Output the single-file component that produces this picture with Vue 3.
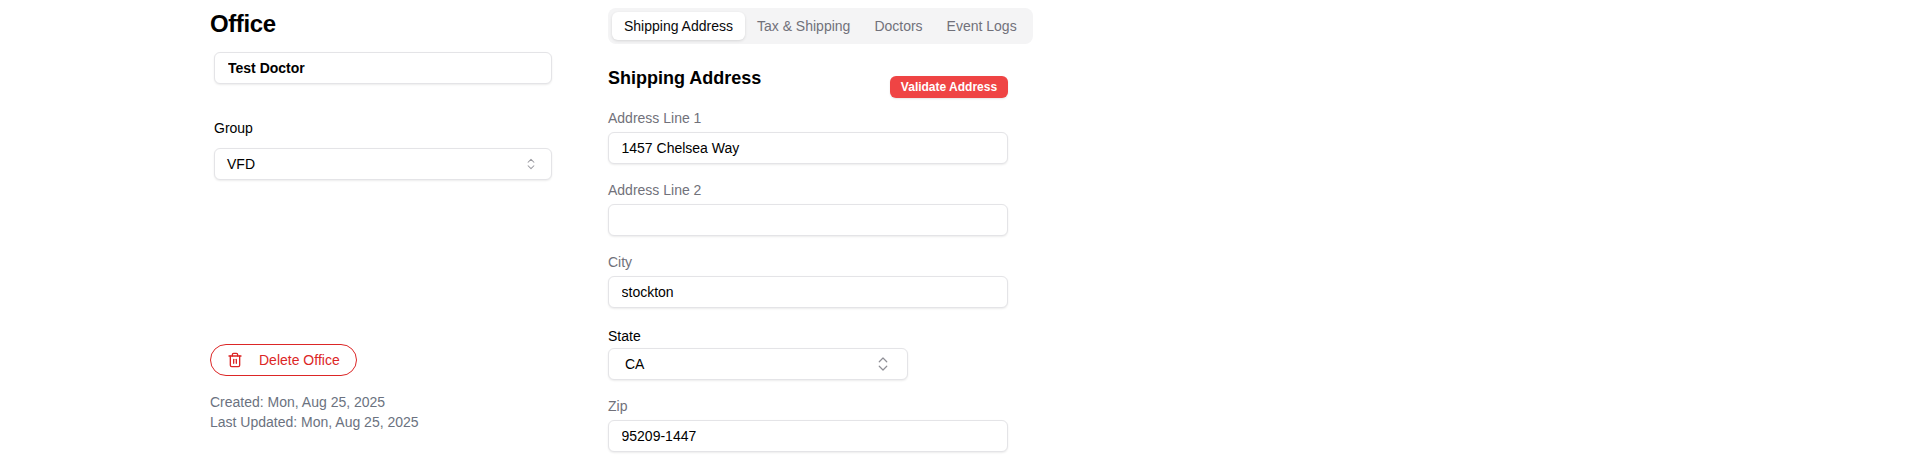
<template>
  <div class="office-page">
    <!-- Left column -->
    <aside class="office-side">
      <h1>Office</h1>
      <div class="side-fields">
        <input class="field name-field" type="text" value="Test Doctor" />
        <label class="group-label">Group</label>
        <button class="field select-field group-select" type="button">
          <span>VFD</span>
          <svg class="chevrons" viewBox="0 0 24 24"><path d="m7 15 5 5 5-5" /><path d="m7 9 5-5 5 5" /></svg>
        </button>
      </div>
      <div class="side-bottom">
        <button class="delete-btn" type="button">
          <svg class="trash" viewBox="0 0 24 24">
            <path d="M3 6h18" />
            <path d="M19 6v14c0 1-1 2-2 2H7c-1 0-2-1-2-2V6" />
            <path d="M8 6V4c0-1 1-2 2-2h4c1 0 2 1 2 2v2" />
            <line x1="10" x2="10" y1="11" y2="17" />
            <line x1="14" x2="14" y1="11" y2="17" />
          </svg>
          <span>Delete Office</span>
        </button>
        <div class="dates">
          <div>Created: {{ created }}</div>
          <div>Last Updated: {{ created }}</div>
        </div>
      </div>
    </aside>

    <!-- Right column -->
    <main class="office-main">
      <nav class="tabs">
        <button
          v-for="tab in tabs"
          :key="tab"
          class="tab"
          :class="{ active: tab === activeTab }"
          type="button"
          @click="activeTab = tab"
        >
          {{ tab }}
        </button>
      </nav>

      <div class="address-form">
        <div class="form-head">
          <h2>Shipping Address</h2>
          <button class="validate-btn" type="button">Validate Address</button>
        </div>

        <label class="muted-label first">Address Line 1</label>
        <input class="field" type="text" value="1457 Chelsea Way" />

        <label class="muted-label">Address Line 2</label>
        <input class="field" type="text" value="" />

        <label class="muted-label">City</label>
        <input class="field" type="text" value="stockton" />

        <label class="state-label">State</label>
        <button class="field select-field state-select" type="button">
          <span>CA</span>
          <svg class="chevrons big" viewBox="0 0 24 24"><path d="m7 15 5 5 5-5" /><path d="m7 9 5-5 5 5" /></svg>
        </button>

        <label class="muted-label">Zip</label>
        <input class="field" type="text" value="95209-1447" />
      </div>
    </main>
  </div>
</template>

<script setup>
import { ref } from 'vue'

const tabs = ['Shipping Address', 'Tax & Shipping', 'Doctors', 'Event Logs']
const activeTab = ref('Shipping Address')
const created = 'Mon, Aug 25, 2025'
</script>

<style scoped>
.office-page {
  display: flex;
  height: 464px;
  padding-left: 210px;
  box-sizing: border-box;
  overflow: hidden;
  background: #fff;
  color: #000;
  font-family: "Liberation Sans", Arial, sans-serif;
  font-size: 14px;
}
/* Left column */
.office-side {
  width: 398px;
  height: 432px;
  display: flex;
  flex-direction: column;
}
.office-side h1 {
  margin: 8px 0 0;
  font-size: 24px;
  line-height: 32px;
  font-weight: 700;
  letter-spacing: -0.4px;
}
.side-fields {
  display: flex;
  flex-direction: column;
  width: 338px;
  margin: 12px 0 0 4px;
}
.group-label {
  margin-top: 34px;
  line-height: 20px;
}
.group-select {
  margin-top: 10px;
}
.side-bottom {
  margin-top: auto;
}
.delete-btn {
  display: flex;
  align-items: center;
  width: 147px;
  height: 32px;
  padding: 0 0 0 16px;
  border: 1px solid #dc2626;
  border-radius: 16px;
  background: #fff;
  color: #dc2626;
  font: inherit;
}
.trash {
  width: 16px;
  height: 16px;
  margin-right: 16px;
  fill: none;
  stroke: currentColor;
  stroke-width: 2;
  stroke-linecap: round;
  stroke-linejoin: round;
}
.dates {
  margin-top: 16px;
  color: #6b7280;
  line-height: 20px;
}
/* Right column */
.office-main {
  width: 425px;
}
.tabs {
  display: flex;
  align-items: center;
  height: 36px;
  margin-top: 8px;
  padding: 0 4px;
  box-sizing: border-box;
  border-radius: 8px;
  background: #f4f4f5;
}
.tab {
  height: 28px;
  padding: 0 12px;
  border: none;
  border-radius: 6px;
  background: transparent;
  color: #71717a;
  font: inherit;
  white-space: nowrap;
}
.tab.active {
  background: #fff;
  color: #09090b;
  box-shadow: 0 1px 3px rgba(0, 0, 0, 0.12);
}
.address-form {
  display: flex;
  flex-direction: column;
  width: 400px;
}
.form-head {
  display: flex;
  align-items: flex-start;
  justify-content: space-between;
  height: 44px;
  margin-top: 20px;
}
.form-head h2 {
  margin: 0;
  font-size: 18px;
  line-height: 28px;
  font-weight: 700;
}
.validate-btn {
  width: 118px;
  height: 22px;
  margin-top: 12px;
  padding: 0;
  border: none;
  border-radius: 6px;
  background: #ef4444;
  color: #fff;
  font: inherit;
  font-size: 12px;
  font-weight: 700;
  box-shadow: 0 1px 2px rgba(0, 0, 0, 0.1);
}
.muted-label,
.state-label {
  height: 20px;
  margin: 16px 0 4px;
  line-height: 20px;
  color: #71717a;
}
.muted-label.first {
  margin-top: 0;
}
.state-label {
  color: #000;
  margin: 18px 0 2px;
}
.field {
  display: block;
  width: 100%;
  height: 32px;
  box-sizing: border-box;
  padding: 0 12.5px;
  border: 1px solid #e4e4e7;
  border-radius: 6px;
  background: #fff;
  color: #000;
  font: inherit;
  box-shadow: 0 1px 2px rgba(0, 0, 0, 0.08);
  outline: none;
}
.name-field {
  padding: 0 13px;
  font-weight: 700;
}
.select-field {
  display: flex;
  align-items: center;
  justify-content: space-between;
  text-align: left;
}
.group-select {
  padding: 0 13px 0 12px;
}
.state-select {
  width: 300px;
  padding: 0 15px 0 16px;
}
.chevrons {
  width: 14px;
  height: 14px;
  fill: none;
  stroke: #9a9aa0;
  stroke-width: 1.75;
  stroke-linecap: round;
  stroke-linejoin: round;
}
.chevrons.big {
  width: 18px;
  height: 18px;
  stroke: #8f8f96;
  stroke-width: 1.6;
}
</style>

<style>
html,
body {
  margin: 0;
  background: #fff;
}
</style>
